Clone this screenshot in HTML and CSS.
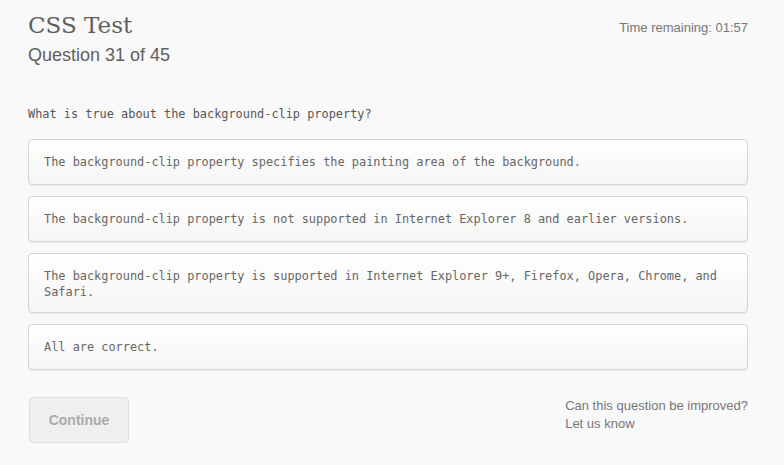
FILE: index.html
```html
<!DOCTYPE html>
<html>
<head>
<meta charset="utf-8">
<link rel="stylesheet" href="styles.css">
</head>
<body>
<div class="page">
  <header class="head">
    <div class="titles">
      <h1 class="title">CSS Test</h1>
      <div class="subtitle">Question 31 of 45</div>
    </div>
    <div class="timer">Time remaining: 01:57</div>
  </header>
  <p class="question">What is true about the background-clip property?</p>
  <div class="options">
    <div class="option">The background-clip property specifies the painting area of the background.</div>
    <div class="option">The background-clip property is not supported in Internet Explorer 8 and earlier versions.</div>
    <div class="option">The background-clip property is supported in Internet Explorer 9+, Firefox, Opera, Chrome, and Safari.</div>
    <div class="option">All are correct.</div>
  </div>
  <div class="foot">
    <button class="continue">Continue</button>
    <div class="improve">Can this question be improved?<br>Let us know</div>
  </div>
</div>
</body>
</html>
```
FILE: styles.css
```css
html, body {
  margin: 0;
  padding: 0;
  background: #f9f9f9;
}
.page {
  width: 720px;
  padding: 10px 0 0 28px;
  font-family: "Liberation Sans", Arial, sans-serif;
  color: #666;
}
.head {
  display: flex;
  justify-content: space-between;
  align-items: flex-start;
}
.title {
  margin: 0;
  font-family: "DejaVu Serif", "Liberation Serif", serif;
  font-weight: normal;
  font-size: 23px;
  line-height: 30px;
  color: #5f5f5f;
}
.subtitle {
  font-size: 18px;
  line-height: 24px;
  color: #5f5f5f;
  margin-top: 3px;
}
.timer {
  font-size: 13px;
  line-height: 16px;
  color: #777;
  margin-top: 10px;
}
.question {
  margin: 39px 0 0 0;
  font-family: "DejaVu Sans Mono", monospace;
  font-size: 11.9px;
  line-height: 16px;
  color: #555;
}
.options {
  display: flex;
  flex-direction: column;
  gap: 11px;
  margin-top: 17px;
}
.option {
  border: 1px solid #d3d5da;
  border-radius: 4px;
  background: linear-gradient(#ffffff, #f5f5f4);
  box-shadow: 0 1px 1px rgba(0,0,0,0.06);
  padding: 14px 30px 12px 15px;
  min-height: 18px;
  font-family: "DejaVu Sans Mono", monospace;
  font-size: 11.9px;
  line-height: 16px;
  color: #666;
}
.foot {
  display: flex;
  justify-content: space-between;
  align-items: flex-start;
  margin-top: 27px;
}
.continue {
  width: 100px;
  height: 46px;
  margin-left: 1px;
  border: 1px solid #dedede;
  border-radius: 4px;
  background: #efefef;
  color: #aaa;
  font-family: "Liberation Sans", Arial, sans-serif;
  font-weight: bold;
  font-size: 14px;
}
.improve {
  font-size: 13px;
  line-height: 18px;
  color: #777;
  white-space: nowrap;
  margin-top: 0;
}
```
